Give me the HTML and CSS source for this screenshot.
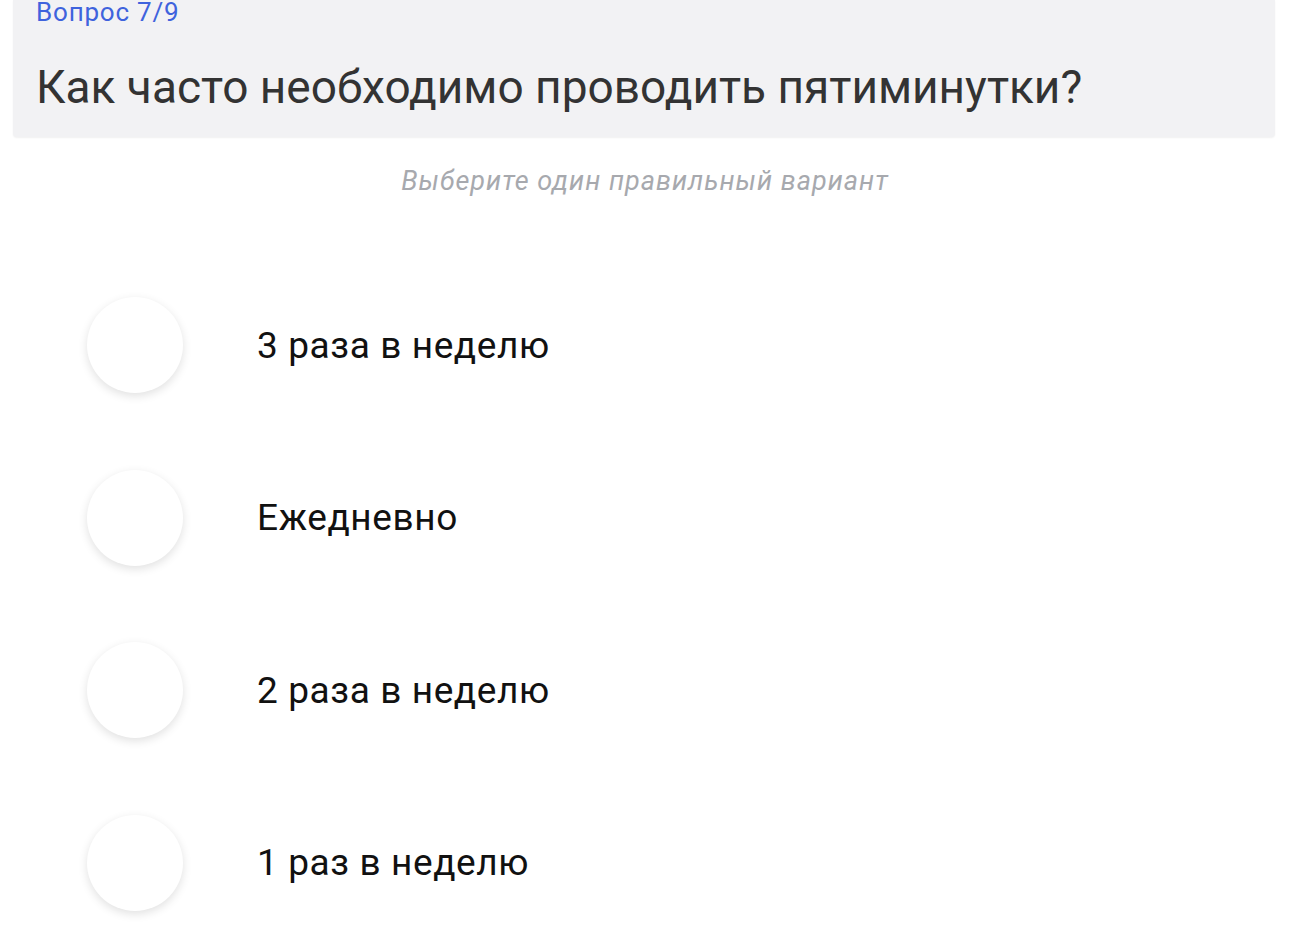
FILE: index.html
```html
<!DOCTYPE html>
<html lang="ru">
<head>
  <meta charset="UTF-8">
  <meta name="viewport" content="width=device-width, initial-scale=1.0">
  <title>Вопрос 7/9</title>
  <link rel="stylesheet" href="styles.css">
</head>
<body>
  <div class="question-card">
    <div class="question-counter">Вопрос 7/9</div>
    <h1 class="question-title">Как часто необходимо проводить пятиминутки?</h1>
  </div>

  <p class="hint">Выберите один правильный вариант</p>

  <ul class="answers">
    <li class="answer">
      <span class="radio"></span>
      <span class="answer-text">3 раза в неделю</span>
    </li>
    <li class="answer">
      <span class="radio"></span>
      <span class="answer-text">Ежедневно</span>
    </li>
    <li class="answer">
      <span class="radio"></span>
      <span class="answer-text">2 раза в неделю</span>
    </li>
    <li class="answer">
      <span class="radio"></span>
      <span class="answer-text">1 раз в неделю</span>
    </li>
  </ul>
</body>
</html>
```

FILE: styles.css
```css
body {
  margin: 0;
  padding-bottom: 40px;
  font-family: Roboto, "Noto Sans", Arial, sans-serif;
  background: #fff;
  color: #111;
}
.question-card {
  margin: 0 15px 0 13px;
  padding: 0 23px 22px;
  background: #f2f2f4;
  border-radius: 0 0 4px 4px;
  box-shadow: 0 1px 2px rgba(0, 0, 0, 0.06);
}
.question-counter {
  font-size: 26px;
  line-height: 25px;
  letter-spacing: 0.8px;
  color: #3f63dd;
}
.question-title {
  margin: 34px 0 0;
  font-size: 46px;
  font-weight: 400;
  line-height: 56px;
  color: #333;
}
.hint {
  margin: 28px 0 0;
  text-align: center;
  font-size: 27px;
  line-height: 32px;
  letter-spacing: 1px;
  font-style: italic;
  color: #a7a9ae;
}
.answers {
  list-style: none;
  margin: 100px 0 0;
  padding: 0 0 0 87px;
  display: flex;
  flex-direction: column;
  gap: 76.5px;
}
.answer {
  display: flex;
  align-items: center;
  gap: 74px;
}
.radio {
  width: 96px;
  height: 96px;
  border-radius: 50%;
  background: #fff;
  box-shadow: 0 3px 10px rgba(0, 0, 0, 0.12);
  flex-shrink: 0;
}
.answer-text {
  font-size: 37px;
  letter-spacing: 0.6px;
  color: #111;
}
```
